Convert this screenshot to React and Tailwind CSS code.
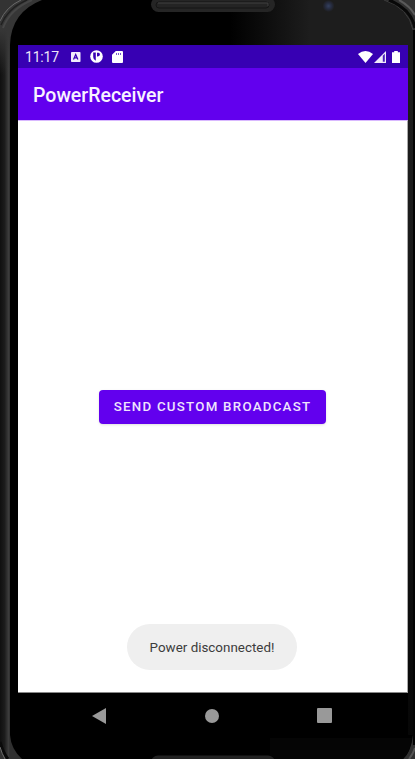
function PhoneShell() {
  return (
    <svg className="absolute inset-0" width="415" height="759" viewBox="0 0 415 759" aria-hidden="true">
      <defs>
        <linearGradient id="rim" x1="0" x2="10" y1="0" y2="0" gradientUnits="userSpaceOnUse">
          <stop offset="0" stopColor="#101010" />
          <stop offset="0.45" stopColor="#1c1c1c" />
          <stop offset="0.85" stopColor="#3c3c3c" />
          <stop offset="1" stopColor="#303030" />
        </linearGradient>
        <linearGradient id="glareX" x1="230" x2="310" y1="0" y2="0" gradientUnits="userSpaceOnUse">
          <stop offset="0" stopColor="#1d1d1d" stopOpacity="0" />
          <stop offset="1" stopColor="#1d1d1d" />
        </linearGradient>
        <linearGradient id="side" x1="0" x2="0" y1="0" y2="759" gradientUnits="userSpaceOnUse">
          <stop offset="0" stopColor="#1d1d1d" />
          <stop offset="0.5" stopColor="#191919" />
          <stop offset="1" stopColor="#050505" />
        </linearGradient>
        <linearGradient id="cornerFade" x1="0" x2="0" y1="30" y2="75" gradientUnits="userSpaceOnUse">
          <stop offset="0" stopColor="#363636" />
          <stop offset="1" stopColor="#363636" stopOpacity="0" />
        </linearGradient>
        <radialGradient id="lens">
          <stop offset="0" stopColor="#34405e" />
          <stop offset="0.5" stopColor="#262c40" />
          <stop offset="1" stopColor="#1d1d1d" />
        </radialGradient>
      </defs>
      <rect width="415" height="759" fill="#333" />
      <path d="M0 21Q6 7 21 0H401Q411 6 415 12V759H5Q1 753 0 745Z" fill="url(#rim)" />
      <path d="M0 21Q6 7 21 0H42Q11 12 10 45V80H0Z" fill="url(#cornerFade)" />
      <path d="M0 21Q6 7 21 0" fill="none" stroke="#6a6a6a" strokeWidth="1" />
      <path d="M1 25Q8 8 27 0" fill="none" stroke="#202020" strokeWidth="1.5" />
      <path d="M3 28Q10 9 32 0" fill="none" stroke="#464646" strokeWidth="2" />
      <path d="M0 742Q3 753 8 759" fill="none" stroke="#0a0a0a" strokeWidth="3" />
      <path d="M0 747Q2 754 5 759" fill="none" stroke="#707070" />
      <path d="M10 45Q11 12 42 0H384Q409 8 413 30V735Q411 752 403 759H22Q11 749 10 735Z" fill="#000" />
      <path d="M230 0H384Q409 8 413 30V45H230Z" fill="url(#glareX)" />
      <rect x="413" y="30" width="2" height="715" fill="#030303" />
      <rect x="408" y="45" width="5" height="690" fill="url(#side)" />
      <path d="M270 738H412Q410 753 403 759H270Z" fill="#050505" />
      <path d="M384 0Q409 8 413 30" fill="none" stroke="#3c3c3c" />
      <path d="M389 0Q411 9 415 28" fill="none" stroke="#080808" strokeWidth="3" />
      <path d="M399 0Q410 6 415 15" fill="none" stroke="#5a5a5a" strokeWidth="2" />
      <path d="M415 748Q413 754 409 759" fill="none" stroke="#555" strokeWidth="2" />
      <rect x="151" y="-3" width="124" height="15" rx="7.5" fill="#252525" />
      <rect x="156" y="2" width="113" height="6" rx="3" fill="#242424" stroke="#151515" />
      <path d="M158 3H268V6" fill="none" stroke="#404040" />
      <circle cx="328.5" cy="6" r="6" fill="url(#lens)" />
      <rect x="151" y="755.5" width="124" height="14" rx="7" fill="#222" />
    </svg>
  );
}

function StatusBar() {
  return (
    <div className="flex h-[23px] items-center bg-[#3700b3] pl-[7px] text-white">
      <span className="w-[46px] text-[14px] leading-none tracking-[-0.2px] text-[#ece5f8]">11:17</span>
      <svg width="10" height="10" viewBox="0 0 10 10">
        <rect width="9.5" height="10" rx="0.8" fill="#f2edfb" />
        <path d="M2.5 7.5L4.7 2.4L6.9 7.5M3.4 5.9H6" fill="none" stroke="#3700b3" strokeWidth="1.2" />
      </svg>
      <svg className="ml-[9px]" width="13" height="13" viewBox="0 0 13 13">
        <circle cx="6.5" cy="6.5" r="6.3" fill="#fff" />
        <path d="M3.2 2.4H5.8V10.8Q3.2 9.8 3.2 7ZM7 2.8H8.6Q10.3 3.2 9.9 5Q9.4 6.6 7 6.4Z" fill="#3700b3" />
      </svg>
      <svg className="ml-[9px]" width="11" height="12" viewBox="0 0 11 12">
        <path d="M3.8 0H10Q11 0 11 1V11Q11 12 10 12H1Q0 12 0 11V3.8Z" fill="#fff" />
        <path d="M4.5 2V4M6.5 2V4M8.5 2V4" stroke="#7a58cc" />
      </svg>
      <svg className="ml-auto" width="15" height="12" viewBox="0 0 15 12">
        <path d="M0 3Q7.5 -3 15 3L7.5 12Z" fill="#fff" />
      </svg>
      <svg className="ml-[1px]" width="12" height="12" viewBox="0 0 12 12">
        <path d="M0 12L12 0V12Z" fill="#f0eafa" />
        <path d="M8.8 4.8V10.8H10.8V2.8Z" fill="#4a1abb" />
      </svg>
      <svg className="ml-[6px] mr-[8px]" width="8" height="12" viewBox="0 0 8 12">
        <path d="M2.2 0H5.8V1.2H8V12H0V1.2H2.2Z" fill="#fff" />
      </svg>
    </div>
  );
}

function NavBar() {
  return (
    <div className="flex h-[45px] items-center justify-between pr-[76px] pl-[74px]">
      <svg width="14" height="16" viewBox="0 0 14 16">
        <path d="M14 0V16L0 8Z" fill="#999" />
      </svg>
      <div className="size-[14px] rounded-full bg-[#999]" />
      <div className="size-[15px] rounded-[1px] bg-[#999]" />
    </div>
  );
}

export default function App() {
  return (
    <div className="relative h-[759px] w-[415px] overflow-hidden font-['Roboto',sans-serif]">
      <PhoneShell />
      <div className="relative pt-[45px] pl-[18px]">
        <div className="w-[390px]">
          <StatusBar />
          <header className="flex h-[52px] items-center bg-[#6200ee] pl-[15px]">
            <h1 className="pt-[3px] text-[19.5px] font-medium leading-none text-[#f8f2ff]">PowerReceiver</h1>
          </header>
          <main className="flex h-[573px] flex-col items-center border-t border-r border-t-[#d9b8ff] border-r-[#aaa] border-b border-b-[#888] bg-white pr-[1px]">
            <button className="mt-[269px] ml-[1px] h-[34px] w-[227px] rounded-[4px] bg-[#6200ee] text-[13.3px] font-medium tracking-[1.25px] whitespace-nowrap text-[#efe4fd] shadow-sm">
              SEND CUSTOM BROADCAST
            </button>
            <div className="mt-[200px] flex h-[46px] w-[170px] items-center justify-center rounded-full bg-[#efefef] pt-[2px] text-[13.4px] whitespace-nowrap text-[#3c3c3c]">
              Power disconnected!
            </div>
          </main>
          <NavBar />
        </div>
      </div>
    </div>
  );
}
